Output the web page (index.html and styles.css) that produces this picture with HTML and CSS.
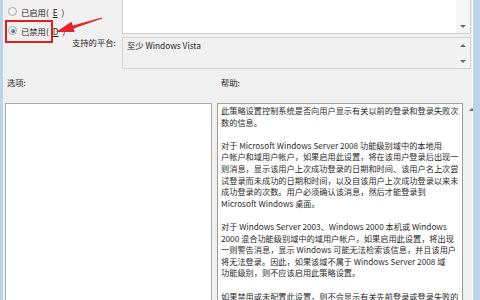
FILE: index.html
```html
<!DOCTYPE html>
<html lang="zh-CN">
<head>
	<meta charset="UTF-8">
	<title>交互式登录: 用户登录时显示有关以前登录的信息</title>
	<link rel="stylesheet" href="styles.css">
</head>
<body>
<div class="dialog">
	<div class="top">
		<div class="radios">
			<div class="radio-row"><span class="radio"></span>已启用(<u>E</u>)</div>
			<div class="radio-row"><span class="radio on"></span>已禁用(<u>D</u>)</div>
		</div>
		<div class="comment box-white">
			<div class="field"></div>
			<div class="scroll"><span class="arr down"></span></div>
		</div>
		<div class="label platform-label">支持的平台:</div>
		<div class="platform">
			<div class="field">至少 Windows Vista</div>
			<div class="scroll"><span class="arr up"></span><span class="arr down"></span></div>
		</div>
	</div>

	<div class="labels">
		<div class="label">选项:</div>
		<div class="label">帮助:</div>
	</div>

	<div class="panels">
		<div class="options"></div>
		<div class="help">
			<p>此策略设置控制系统是否向用户显示有关以前的登录和登录失败次<br>数的信息。</p>
			<p>对于 Microsoft Windows Server 2008 功能级别域中的本地用<br>户帐户和域用户帐户，如果启用此设置，将在该用户登录后出现一<br>则消息，显示该用户上次成功登录的日期和时间、该用户名上次尝<br>试登录而未成功的日期和时间，以及自该用户上次成功登录以来未<br>成功登录的次数。用户必须确认该消息，然后才能登录到<br>Microsoft Windows 桌面。</p>
			<p>对于 Windows Server 2003、Windows 2000 本机或 Windows<br>2000 混合功能级别域中的域用户帐户，如果启用此设置，将出现<br>一则警告消息，显示 Windows 可能无法检索该信息，并且该用户<br>将无法登录。因此，如果该域不属于 Windows Server 2008 域<br>功能级别，则不应该启用此策略设置。</p>
			<p>如果禁用或未配置此设置，则不会显示有关先前登录或登录失败的</p>
		</div>
		<div class="help-scroll"><span class="arr up"></span></div>
	</div>

	<!-- 标注 -->
	<div class="mark"></div>
	<svg class="pointer" width="110" height="45" viewBox="0 0 110 45">
		<polygon fill="#e5232b" points="56,32 74.7,32 73.6,28.4 102.2,18.6 101.8,17.4 72.8,25.4 71.4,21.8"/>
	</svg>
</div>
</body>
</html>
```

FILE: styles.css
```css
*{margin:0;padding:0;box-sizing:border-box;}
body{
	width:480px;height:300px;overflow:hidden;
	font-family:"Noto Sans CJK SC","Noto Sans",sans-serif;
	color:#1e1e1e;background:#bcd3ec;
}
.dialog{
	position:relative;
	height:300px;
	margin-left:3px;margin-right:7px;
	background:#f0f0f0;
	box-shadow:inset -1px 0 #fbfbfb;
	overflow:hidden;
}
.label{font-size:8.3px;line-height:11px;white-space:nowrap;}

/* 上半部分 */
.top{
	display:grid;
	grid-template-columns:69px 50px 1fr;
	grid-template-rows:34px 32px;
	row-gap:3px;
	padding-right:2px;
}
.radios{grid-column:1;grid-row:1 / span 2;padding:2px 0 0 5px;}
.radio-row{
	display:flex;align-items:center;gap:4px;
	height:19px;font-size:8.3px;white-space:nowrap;
}
.radio-row u{text-decoration:underline;}
.radio{
	width:9px;height:9px;border-radius:50%;
	border:1px solid #a9a9a9;
	background:radial-gradient(circle at 40% 40%,#fff,#e2e2e2);
	display:flex;align-items:center;justify-content:center;
}
.radio.on::after{
	content:"";width:4px;height:4px;border-radius:50%;
	background:radial-gradient(circle at 35% 35%,#7d9fcf,#1f3f6e);
}
.comment{
	grid-column:3;grid-row:1;
	display:flex;
	background:#fff;
	border:1px solid #cdcdcd;border-top:none;
}
.field{flex:1;}
.scroll{
	width:14px;
	display:flex;flex-direction:column;justify-content:flex-end;align-items:center;
	padding-bottom:5px;
	background:#f6f6f6;
}
.platform-label{grid-column:2;grid-row:2;padding-top:0;}
.platform{
	grid-column:3;grid-row:2;
	display:flex;
	border:1px solid #d2d2d2;
	background:#f0f0f0;
}
.platform .field{font-size:8.3px;line-height:11px;padding:2px 0 0 4px;white-space:nowrap;}
.platform .scroll{justify-content:space-between;padding:6px 0 5px;background:#f2f2f2;}
.arr{width:0;height:0;border-left:3px solid transparent;border-right:3px solid transparent;}
.arr.down{border-top:3px solid #6a6a6a;}
.arr.up{border-bottom:3px solid #6a6a6a;}

/* 标签行 */
.labels{
	display:grid;
	grid-template-columns:214px 1fr;
	height:34px;
	padding:8px 0 0 4px;
}

/* 下半部分 */
.panels{
	display:grid;
	grid-template-columns:207px 246px 1fr;
	column-gap:5px;
	padding-left:2px;
	height:200px;
}
.options{background:#fff;border:1px solid #acacac;}
.help{
	background:#fff;border:1px solid #9c9c9c;
	padding:1px 0 0 3px;
	color:#2a2a2a;
	overflow:hidden;
}
.help p{
	font-size:8.2px;line-height:11.6px;
	white-space:nowrap;
	margin-bottom:11.6px;
}
.help-scroll{
	display:flex;justify-content:center;
	margin-left:-5px;
	padding:5px 0 0 6px;
}

/* 红色标注 */
.mark{
	position:absolute;left:2px;top:20px;
	width:48px;height:23px;
	border:2px solid #e0201c;
}
.pointer{position:absolute;left:-3px;top:0;}
```
